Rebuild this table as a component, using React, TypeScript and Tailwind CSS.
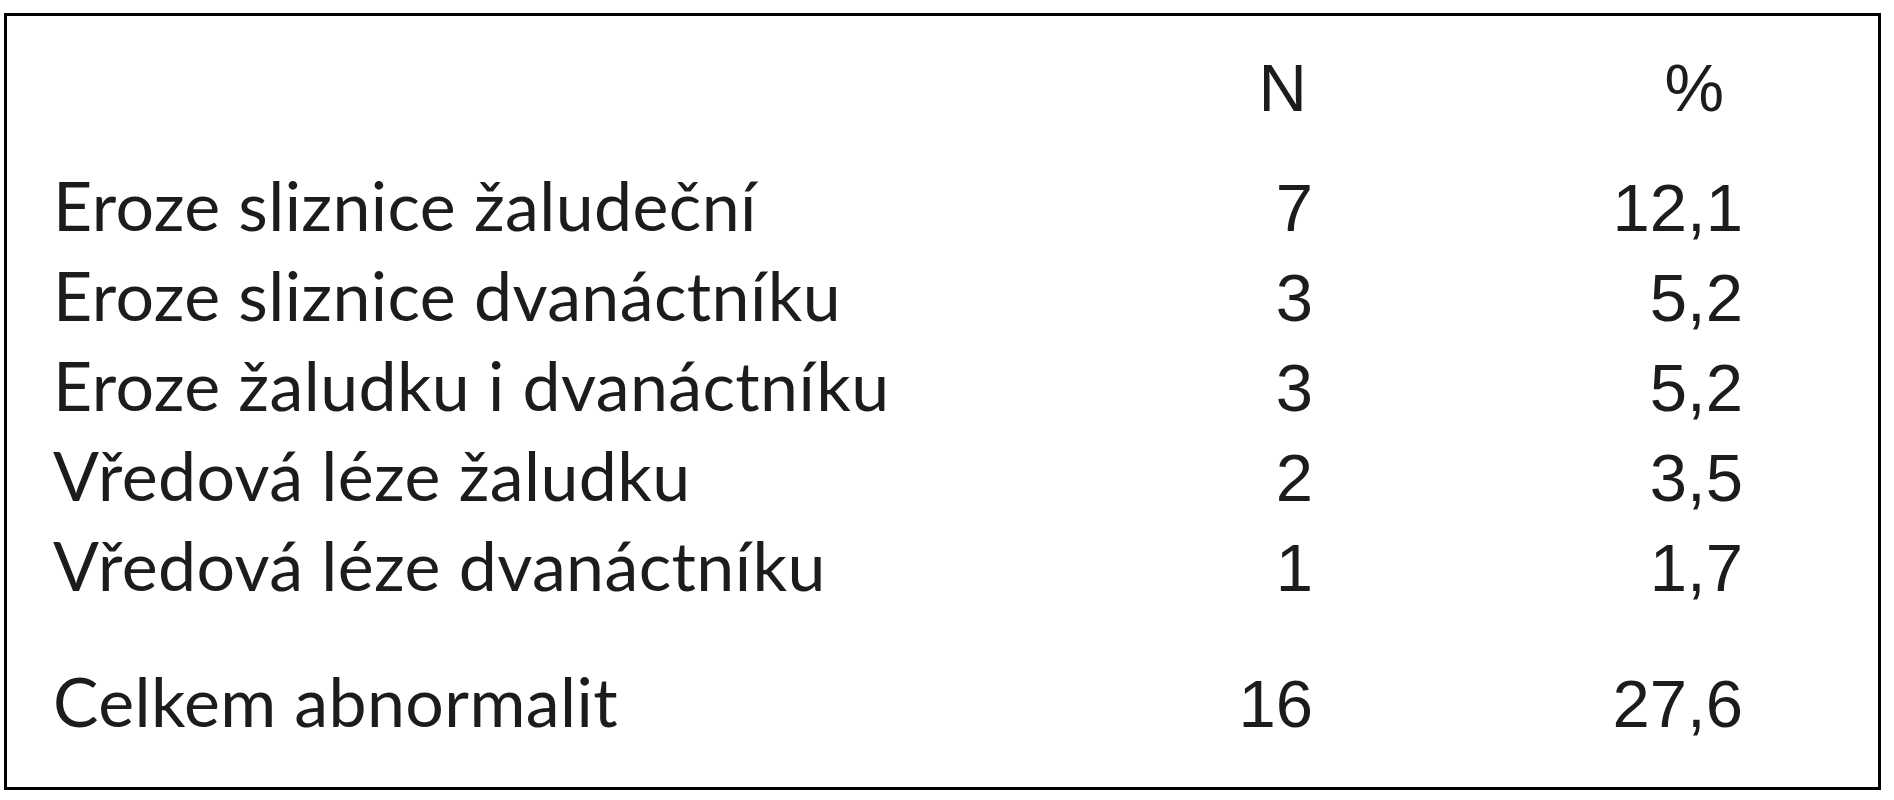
import React from "react";

const rows = [
    { label: "Eroze sliznice žaludeční", n: "7", pct: "12,1" },
    { label: "Eroze sliznice dvanáctníku", n: "3", pct: "5,2" },
    { label: "Eroze žaludku i dvanáctníku", n: "3", pct: "5,2" },
    { label: "Vředová léze žaludku", n: "2", pct: "3,5" },
    { label: "Vředová léze dvanáctníku", n: "1", pct: "1,7" },
];

const labelFont = { fontFamily: "Lato, 'Noto Sans', sans-serif" };
const numFont = { fontFamily: "'Liberation Sans', Arial, sans-serif" };

function Row({ label, n, pct, className = "" }: { label: string; n: string; pct: string; className?: string }) {
    return (
        <div className={`flex h-[90px] items-baseline leading-[90px] ${className}`}>
            <div className="w-[1160px] text-[68px] tracking-[0.4px]" style={labelFont}>
                {label}
            </div>
            <div className="w-[100px] text-right text-[67px]" style={numFont}>
                {n}
            </div>
            <div className="w-[430px] text-right text-[67px]" style={numFont}>
                {pct}
            </div>
        </div>
    );
}

export default function App() {
    return (
        <div className="min-h-[800px] bg-white pl-[4px] pt-[13px] text-[#1c1c1c]">
            <div className="h-[777px] w-[1877px] border-[3px] border-black pl-[46px] pt-[27px]">
                {/* header */}
                <div className="flex h-[117px] items-start leading-[90px]">
                    <div className="w-[1160px]" />
                    <div className="w-[100px] pr-[6px] text-right text-[67px]" style={numFont}>
                        N
                    </div>
                    <div className="w-[430px] pr-[19px] text-right text-[67px]" style={numFont}>
                        %
                    </div>
                </div>

                {rows.map((r) => (
                    <Row key={r.label} {...r} />
                ))}

                <Row label="Celkem abnormalit" n="16" pct="27,6" className="mt-[46px]" />
            </div>
        </div>
    );
}
